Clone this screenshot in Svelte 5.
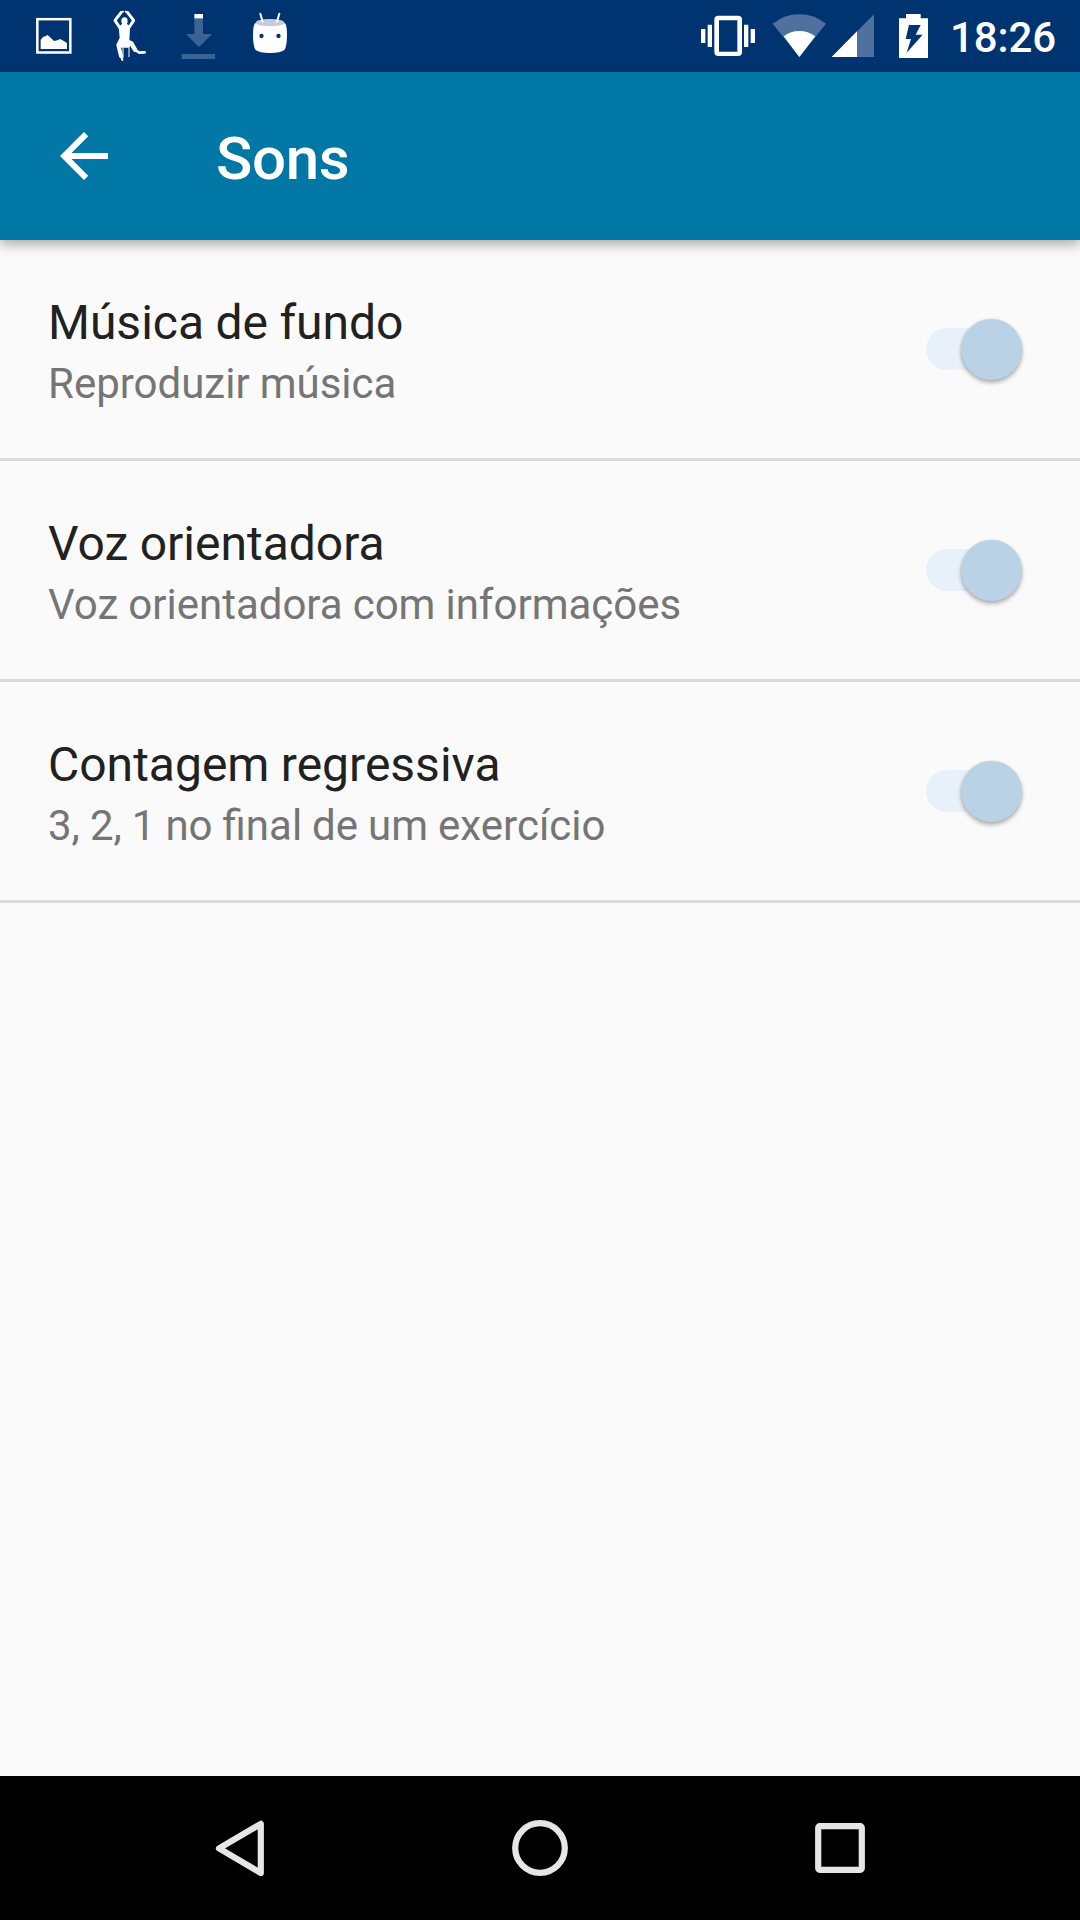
<script>
  let settings = $state([
    { title: 'Música de fundo', detail: 'Reproduzir música', on: true },
    { title: 'Voz orientadora', detail: 'Voz orientadora com informações', on: true },
    { title: 'Contagem regressiva', detail: '3, 2, 1 no final de um exercício', on: true }
  ]);
</script>

<div class="screen">
  <div class="status">
    <div class="group">
      <svg class="notif" viewBox="-6 0 216 216">
        <rect x="52" y="57.500" width="99" height="100" fill="none" stroke="#fff" stroke-width="7.500" />
        <path fill="#fff" d="M62 119L69 111L76 109L82 105L89 110L102 123L112 121L120 117L130 122L141 129V147H62z" />
      </svg>
      <svg class="notif" viewBox="210 0 216 216">
        <g fill="none" stroke="#fff" stroke-linecap="round" stroke-linejoin="round">
          <path stroke-width="9" d="M300 84L285 61L303 38" />
          <path stroke-width="9" d="M326 84L341 61L323 38" />
          <path stroke-width="6" d="M303 37L309 35M323 37L317 35" />
          <path stroke-width="12" d="M303 126L295 135L303 168" />
          <path stroke-width="13" d="M318 124L334 130L345 149" />
          <path stroke-width="8" d="M347 151L358 158L374 157" />
          <path stroke-width="6" d="M303 168L307 180" />
          <path stroke-width="3" d="M327 140V170M309 144V174" />
        </g>
        <ellipse cx="313.500" cy="63" rx="9.500" ry="11" fill="#fff" />
        <path fill="#fff" d="M309 70H319L330 80L329 103L328 121L338 129L326 143H301L290 131L299 114L296 80z" />
      </svg>
      <svg class="notif" viewBox="6 0 216 216">
        <path fill="#3a6496" d="M103 54H129V102H156L117 141L78 102H103zM65 162H165V177H65z" />
        <path fill="#fff" d="M103 42H129V55H103z" />
      </svg>
      <svg class="notif" viewBox="222 0 216 216">
        <path fill="#fff" d="M285 70Q330 58 375 70Q381 76 381 105Q381 139 373 150Q362 159 330 159Q298 159 287 150Q279 139 279 105Q279 76 285 70z" />
        <ellipse cx="330" cy="68" rx="43" ry="11" fill="#c3cddb" />
        <path fill="none" stroke="#fff" stroke-width="6" stroke-linecap="round" d="M301 41L308 65M358 41L351 65" />
        <circle cx="304.500" cy="108" r="6.500" fill="#04326b" />
        <circle cx="355.500" cy="108" r="6.500" fill="#04326b" />
      </svg>
    </div>
    <div class="group">
      <svg class="vibrate" viewBox="0 0 225 216">
        <path fill="#fff" d="M33 87H46V129H33zM53 74H66V141H53zM162 74H175V141H162zM182 87H195V129H182z" />
        <path fill="#fff" fill-rule="evenodd" d="M85 47H144Q156 47 156 59V156Q156 168 144 168H85Q73 168 73 156V59Q73 47 85 47zM87 61V155H142V61z" />
      </svg>
      <svg class="wifi" viewBox="225 0 195 216">
        <path fill="#4f71a0" d="M328 171L248 71Q284 43 328 43Q372 43 408 71z" />
        <path fill="#fff" d="M328 171L281 109Q302 93 328 93Q354 93 376 109z" />
      </svg>
      <svg class="signal" viewBox="420 0 150 216">
        <path fill="#4f71a0" d="M552 43V171H425z" />
        <path fill="#fff" d="M501 94V171H425z" />
      </svg>
      <svg class="battery" viewBox="0 0 195 216">
        <path fill="#fff" d="M78 42H122V55H144V174H57V55H78z" />
        <path fill="#003470" d="M87 75H122L107 104H128L80 158L93 117H77z" />
      </svg>
      <span class="clock">18:26</span>
    </div>
  </div>

  <header class="bar">
    <svg class="back" viewBox="0 0 24 24">
      <path fill="#fff" d="M20 11H7.830l5.590-5.590L12 4l-8 8 8 8 1.410-1.410L7.830 13H20z" />
    </svg>
    <h1>Sons</h1>
  </header>

  <main>
    {#each settings as item}
      <div class="row">
        <div class="text">
          <div class="title">{item.title}</div>
          <div class="detail">{item.detail}</div>
        </div>
        <button
          class="switch"
          class:on={item.on}
          role="switch"
          aria-checked={item.on}
          aria-label={item.title}
          onclick={() => (item.on = !item.on)}
        >
          <span class="thumb"></span>
        </button>
      </div>
    {/each}
  </main>

  <nav>
    <svg viewBox="0 0 72 72"><path d="M15 36.400L56.800 11.800V61z" /></svg>
    <svg viewBox="0 0 72 72"><circle cx="36" cy="36" r="24.800" /></svg>
    <svg viewBox="0 0 72 72"><rect x="14.200" y="14.200" width="43.600" height="43.600" rx="1.500" /></svg>
  </nav>
</div>

<style>
  :global(body) {
    margin: 0;
    background: #fafafa;
  }

  .screen {
    display: flex;
    flex-direction: column;
    width: 1080px;
    height: 1920px;
    overflow: hidden;
    background: #fafafa;
    font-family: Roboto, 'Liberation Sans', sans-serif;
  }

  .status {
    display: flex;
    justify-content: space-between;
    box-sizing: border-box;
    height: 72px;
    flex: none;
    padding: 0 24px 0 18px;
    background: #003470;
  }

  .group {
    display: flex;
  }

  .group svg {
    display: block;
    height: 72px;
  }

  .notif { width: 72px; }
  .vibrate { width: 75px; }
  .wifi { width: 65px; }
  .signal { width: 50px; }
  .battery { width: 65px; }

  .clock {
    width: 111px;
    color: #fff;
    font-size: 42px;
    font-weight: 500;
    line-height: 75px;
    text-align: right;
    letter-spacing: -0.1px;
    white-space: nowrap;
  }

  .bar {
    display: flex;
    align-items: center;
    flex: none;
    box-sizing: border-box;
    height: 168px;
    padding-left: 48px;
    background: #0077a4;
    box-shadow: 0 4px 12px rgba(0, 0, 0, 0.34);
    z-index: 1;
  }

  .back {
    width: 72px;
    height: 72px;
    margin-right: 96px;
  }

  h1 {
    margin: 0;
    padding-top: 6px;
    color: #fff;
    font-size: 60px;
    font-weight: 500;
    line-height: 70px;
    letter-spacing: -0.3px;
  }

  main {
    flex: 1;
  }

  .row {
    display: flex;
    align-items: center;
    justify-content: space-between;
    box-sizing: border-box;
    height: 221px;
    padding: 0 58px 0 48px;
    border-bottom: 3px solid #dadada;
  }

  .text {
    padding-top: 5px;
  }

  .title {
    color: #212121;
    font-size: 48px;
    line-height: 56px;
    word-spacing: -0.5px;
  }

  .detail {
    margin-top: 8px;
    color: #757575;
    font-size: 42px;
    line-height: 50px;
    word-spacing: -0.4px;
  }

  .switch {
    display: flex;
    align-items: center;
    width: 96px;
    height: 42px;
    padding: 0;
    border: 0;
    border-radius: 21px;
    background: #e6e6e6;
  }

  .switch.on {
    justify-content: flex-end;
    background: linear-gradient(to right, #e8f1f9 75px, transparent 75px);
  }

  .thumb {
    width: 61px;
    height: 61px;
    flex: none;
    border-radius: 50%;
    background: #f5f5f5;
    box-shadow: 0 3px 4px rgba(0, 0, 0, 0.28), 0 0 3px rgba(0, 0, 0, 0.1);
  }

  .on .thumb {
    background: #bad2e6;
  }

  nav {
    display: flex;
    align-items: center;
    justify-content: space-between;
    box-sizing: border-box;
    height: 144px;
    flex: none;
    padding: 0 204px;
    background: #000;
  }

  nav svg {
    width: 72px;
    height: 72px;
    fill: none;
    stroke: #e6e6e6;
    stroke-width: 6.2;
    stroke-linejoin: round;
  }
</style>
